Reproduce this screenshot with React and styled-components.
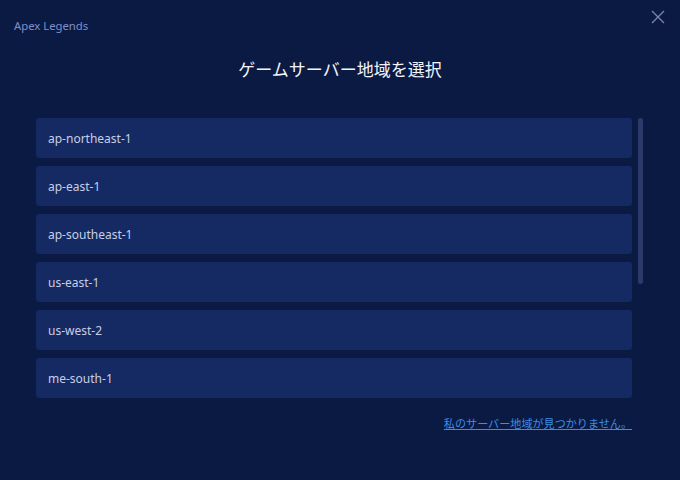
import React from "react";
import styled, { createGlobalStyle } from "styled-components";

const Global = createGlobalStyle`
  html, body {
    margin: 0;
    padding: 0;
    background: #0b1a43;
  }
  body {
    font-family: "Noto Sans", "Noto Sans CJK JP", sans-serif;
  }
`;

const regions = [
  "ap-northeast-1",
  "ap-east-1",
  "ap-southeast-1",
  "us-east-1",
  "us-west-2",
  "me-south-1",
];

const Window = styled.div`
  width: 680px;
  height: 480px;
  box-sizing: border-box;
  background: #0b1a43;
  display: flex;
  flex-direction: column;
  position: relative;
  overflow: hidden;
`;

const TopBar = styled.div`
  height: 50px;
  display: flex;
  align-items: flex-start;
  justify-content: space-between;
  padding: 18px 12px 0 14px;
  box-sizing: border-box;
`;

const AppName = styled.span`
  font-size: 11.3px;
  color: #7f8fca;
  line-height: 16px;
`;

const CloseButton = styled.button`
  background: none;
  border: none;
  padding: 0;
  margin-top: -11px;
  width: 20px;
  height: 20px;
  display: flex;
  align-items: center;
  justify-content: center;
  cursor: pointer;
`;

const Title = styled.h1`
  margin: 0;
  height: 68px;
  font-size: 17px;
  font-weight: 400;
  color: #f2f4fa;
  text-align: center;
  line-height: 38px;
  font-family: "Noto Sans CJK JP", sans-serif;
`;

const ListArea = styled.div`
  display: flex;
  gap: 6px;
  padding: 0 0 0 36px;
`;

const List = styled.div`
  width: 596px;
  display: flex;
  flex-direction: column;
  gap: 8px;
`;

const Item = styled.div`
  height: 40px;
  border-radius: 3px;
  background: #152a62;
  display: flex;
  align-items: center;
  padding-left: 12px;
  font-size: 12px;
  color: #c7cfe6;
`;

const Track = styled.div`
  width: 5px;
  height: 166px;
  border-radius: 3px;
  background: #2a3a6b;
`;

const Footer = styled.div`
  display: flex;
  justify-content: flex-end;
  padding: 17px 48px 0 0;
`;

const NotFound = styled.a`
  font-size: 11.1px;
  color: #3a8de6;
  text-decoration: underline;
  font-family: "Noto Sans CJK JP", sans-serif;
  cursor: pointer;
`;

export default function App() {
  return (
    <Window>
      <Global />
      <TopBar>
        <AppName>Apex Legends</AppName>
        <CloseButton aria-label="close">
          <svg width="14" height="14" viewBox="0 0 14 14">
            <path d="M1 1 L13 13 M13 1 L1 13" stroke="#7a86ab" strokeWidth="1.3" fill="none" />
          </svg>
        </CloseButton>
      </TopBar>
      <Title>ゲームサーバー地域を選択</Title>
      <ListArea>
        <List>
          {regions.map((r) => (
            <Item key={r}>{r}</Item>
          ))}
        </List>
        <Track />
      </ListArea>
      <Footer>
        <NotFound>私のサーバー地域が見つかりません。</NotFound>
      </Footer>
    </Window>
  );
}
